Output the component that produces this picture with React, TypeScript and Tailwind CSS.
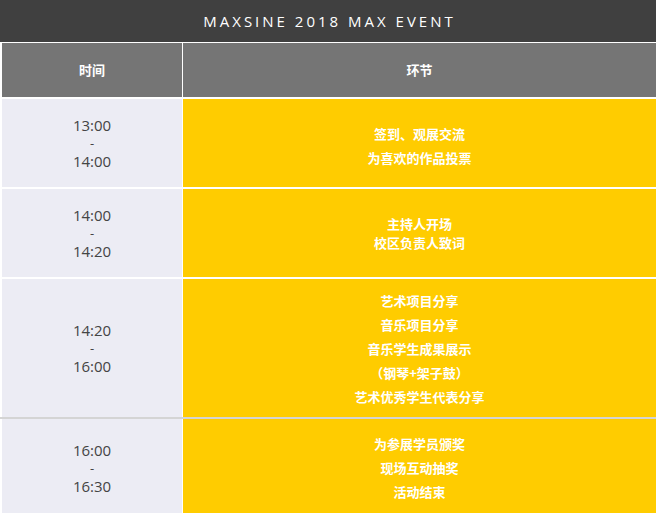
const rows = [
  { time: ["13:00", "-", "14:00"], items: ["签到、观展交流", "为喜欢的作品投票"], h: "h-[90px]", lh: "leading-[24px]", pt: "pt-[6px]", top: "border-white" },
  { time: ["14:00", "-", "14:20"], items: ["主持人开场", "校区负责人致词"], h: "h-[90px]", lh: "leading-[19px]", pt: "pt-0", top: "border-white" },
  {
    time: ["14:20", "-", "16:00"],
    items: ["艺术项目分享", "音乐项目分享", "音乐学生成果展示", "（钢琴+架子鼓）", "艺术优秀学生代表分享"],
    h: "h-[140px]",
    lh: "leading-[24px]",
    pt: "pt-[2px]",
    top: "border-white",
  },
  { time: ["16:00", "-", "16:30"], items: ["为参展学员颁奖", "现场互动抽奖", "活动结束"], h: "h-[100px]", lh: "leading-[24px]", pt: "pt-0", top: "border-[#d4d4d4]" },
]

export default function App() {
  return (
    <div className="w-[656px] bg-white">
      <div className="flex h-[42px] items-center justify-center bg-[#404040] pl-[3px] font-['Open_Sans',sans-serif] text-[15px] tracking-[3px] text-white">
        MAXSINE 2018 MAX EVENT
      </div>
      <div className="flex h-[55px] border-t border-white pl-[2px] font-['Noto_Sans_CJK_SC',sans-serif] text-[13px] font-bold text-white">
        <div className="flex w-[180px] items-center justify-center bg-[#757575]">时间</div>
        <div className="ml-px flex flex-1 items-center justify-center bg-[#757575]">环节</div>
      </div>
      {rows.map((r, i) => (
        <div key={i} className={`flex ${r.h} border-t-2 ${r.top} pl-[2px]`}>
          <div className="flex w-[180px] flex-col items-center justify-center bg-[#ececf4] font-['Open_Sans',sans-serif] text-[15px] leading-[18px] text-[#444]">
            {r.time.map((t, j) => (
              <span key={j} className={t === "-" ? "text-[13px]" : ""}>
                {t}
              </span>
            ))}
          </div>
          <div
            className={`ml-px flex flex-1 flex-col items-center justify-center bg-[#ffcc00] ${r.pt} font-['Noto_Sans_CJK_SC',sans-serif] text-[13px] font-bold ${r.lh} text-white`}
          >
            {r.items.map((t, j) => (
              <span key={j}>{t}</span>
            ))}
          </div>
        </div>
      ))}
    </div>
  )
}
